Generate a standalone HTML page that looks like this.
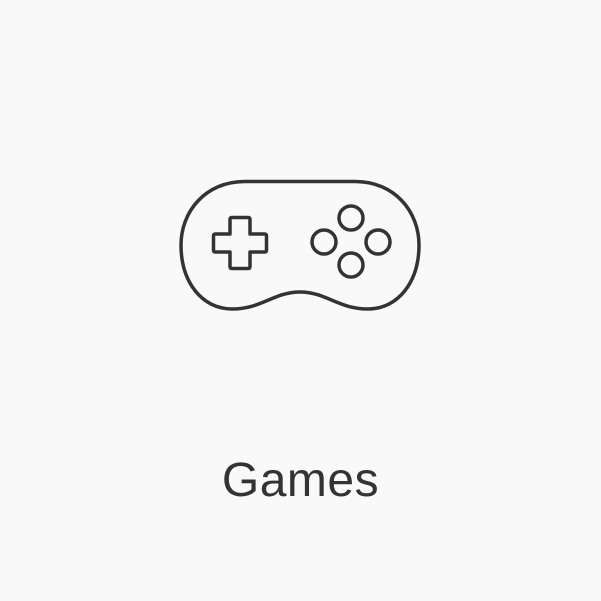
<!DOCTYPE html>
<html><head><style>
html,body{margin:0;padding:0;width:601px;height:601px;background:#f9f9f9;overflow:hidden}
.t{position:absolute;left:0;width:601px;top:448px;text-align:center;font-family:"Liberation Sans",sans-serif;font-size:48px;color:#333;line-height:66px;letter-spacing:0.5px}
</style></head><body>
<svg width="601" height="601" style="position:absolute;left:0;top:0" fill="none" stroke="#333" stroke-width="3.5" stroke-linejoin="round">
<path d="M245,181.5 H355 C395,181.5 419,212 419,245 C419,282 398,309 368,309 C338,309 326,292 300,292 C274,292 262,309 232,309 C202,309 181,282 181,245 C181,212 205,181.5 245,181.5 Z"/>
<path d="M232,217.5 H248 Q250,217.5 250,219.5 V234 H264.5 Q266.5,234 266.5,236 V250 Q266.5,252 264.5,252 H250 V266.5 Q250,268.5 248,268.5 H232 Q230,268.5 230,266.5 V252 H215.5 Q213.5,252 213.5,250 V236 Q213.5,234 215.5,234 H230 V219.5 Q230,217.5 232,217.5 Z"/>
<circle cx="351" cy="218" r="12"/>
<circle cx="324" cy="242" r="12"/>
<circle cx="378" cy="242" r="12"/>
<circle cx="351" cy="265" r="12"/>
</svg>
<div class="t">Games</div>
</body></html>
